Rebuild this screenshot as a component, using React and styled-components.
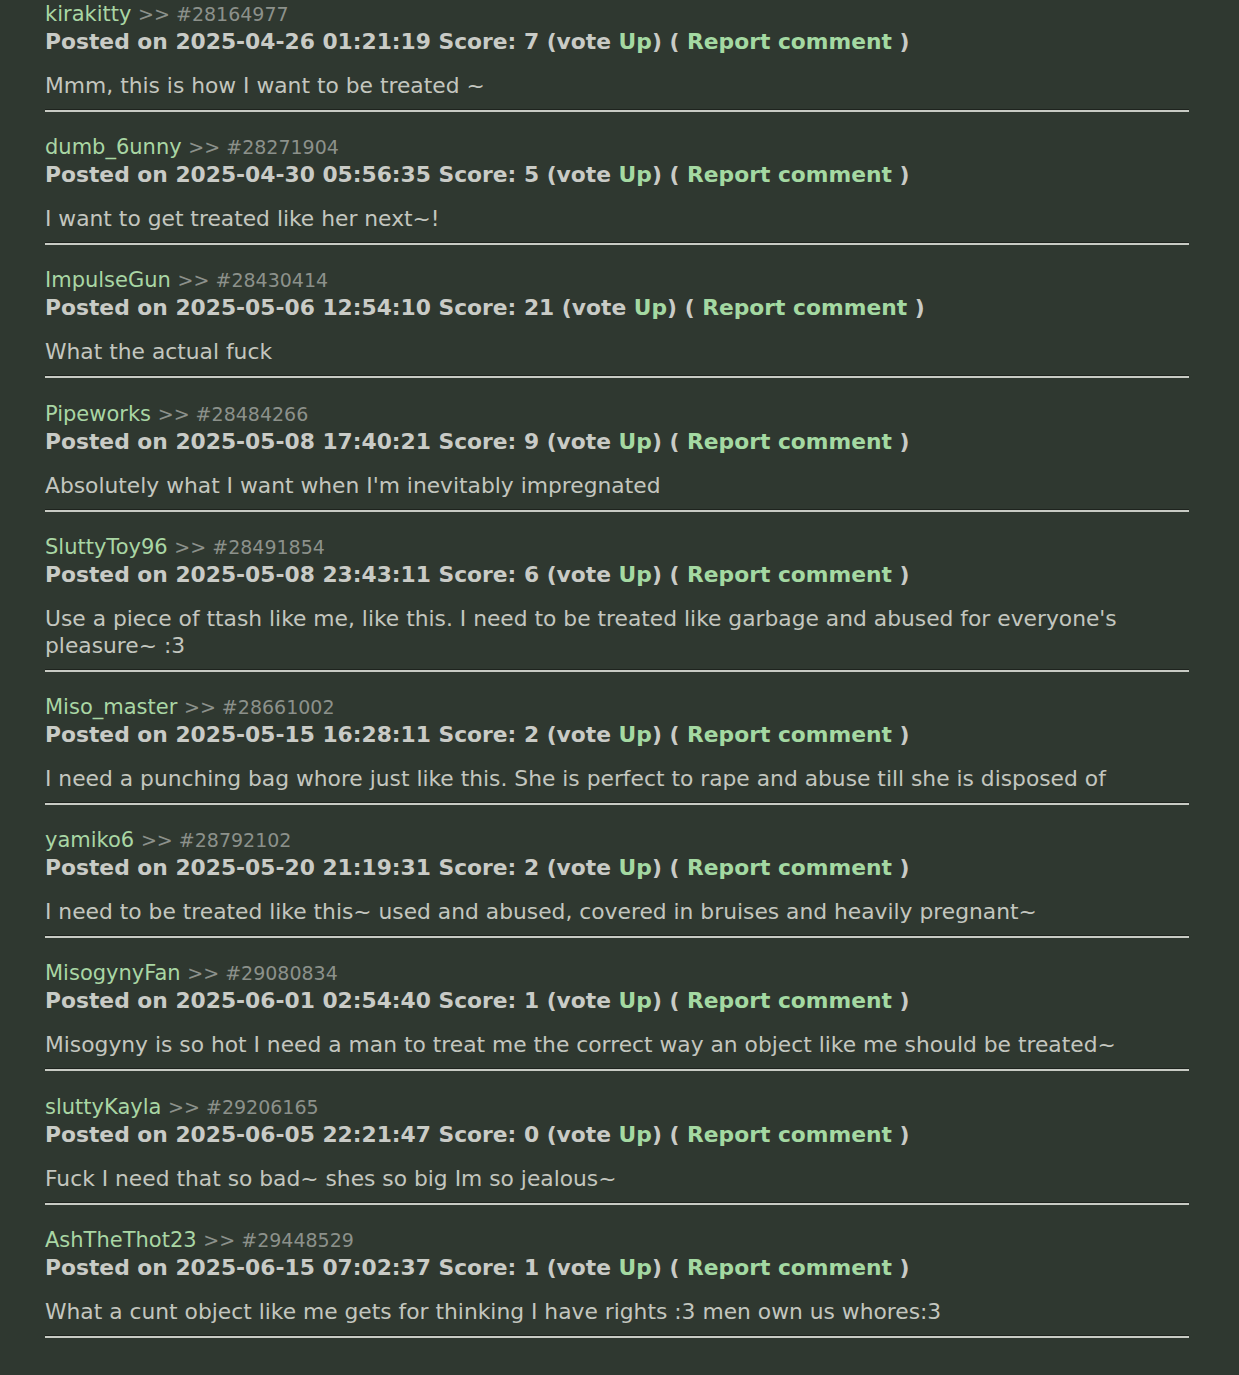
import React from 'react';
import styled, { createGlobalStyle } from 'styled-components';

const GlobalStyle = createGlobalStyle`
  html, body {
    margin: 0;
    padding: 0;
    background: #2f3830;
  }
  body {
    font-family: "DejaVu Sans", Verdana, sans-serif;
  }
`;

const Page = styled.div`
  background: #2f3830;
  min-height: 1375px;
  padding: 1px 50px 0 45px;
  box-sizing: border-box;
`;

const Comment = styled.div`
  padding-bottom: 22.2px;
`;

const Header = styled.div`
  font-size: 21px;
  line-height: 27px;
  color: #a9d6a4;
`;

const CommentId = styled.span`
  font-size: 19px;
  color: #8c918b;
`;

const Posted = styled.div`
  font-size: 21.8px;
  line-height: 27px;
  font-weight: bold;
  color: #c9cbc6;
`;

const Green = styled.span`
  color: #a4d9a2;
`;

const Body = styled.p`
  margin: 17px 0 0;
  font-size: 21.8px;
  line-height: 27px;
  color: #c3c6bf;
`;

const Rule = styled.hr`
  margin: 10px 0 0;
  height: 0;
  border: none;
  border-top: 1px solid #1e231e;
  border-bottom: 2px solid #c8cbc4;
`;

const comments = [
  { user: 'kirakitty', id: '28164977', date: '2025-04-26 01:21:19', score: 7, text: 'Mmm, this is how I want to be treated ~' },
  { user: 'dumb_6unny', id: '28271904', date: '2025-04-30 05:56:35', score: 5, text: 'I want to get treated like her next~!' },
  { user: 'ImpulseGun', id: '28430414', date: '2025-05-06 12:54:10', score: 21, text: 'What the actual fuck' },
  { user: 'Pipeworks', id: '28484266', date: '2025-05-08 17:40:21', score: 9, text: "Absolutely what I want when I'm inevitably impregnated" },
  { user: 'SluttyToy96', id: '28491854', date: '2025-05-08 23:43:11', score: 6, text: "Use a piece of ttash like me, like this. I need to be treated like garbage and abused for everyone's pleasure~ :3" },
  { user: 'Miso_master', id: '28661002', date: '2025-05-15 16:28:11', score: 2, text: 'I need a punching bag whore just like this. She is perfect to rape and abuse till she is disposed of' },
  { user: 'yamiko6', id: '28792102', date: '2025-05-20 21:19:31', score: 2, text: 'I need to be treated like this~ used and abused, covered in bruises and heavily pregnant~' },
  { user: 'MisogynyFan', id: '29080834', date: '2025-06-01 02:54:40', score: 1, text: 'Misogyny is so hot I need a man to treat me the correct way an object like me should be treated~' },
  { user: 'sluttyKayla', id: '29206165', date: '2025-06-05 22:21:47', score: 0, text: 'Fuck I need that so bad~ shes so big Im so jealous~' },
  { user: 'AshTheThot23', id: '29448529', date: '2025-06-15 07:02:37', score: 1, text: 'What a cunt object like me gets for thinking I have rights :3 men own us whores:3' },
];

export default function App() {
  return (
    <Page>
      <GlobalStyle />
      {comments.map((c) => (
        <Comment key={c.id}>
          <Header>
            {c.user} <CommentId>&gt;&gt; #{c.id}</CommentId>
          </Header>
          <Posted>
            Posted on {c.date} Score: {c.score} (vote <Green>Up</Green>) ( <Green>Report comment</Green> )
          </Posted>
          <Body>{c.text}</Body>
          <Rule />
        </Comment>
      ))}
    </Page>
  );
}
